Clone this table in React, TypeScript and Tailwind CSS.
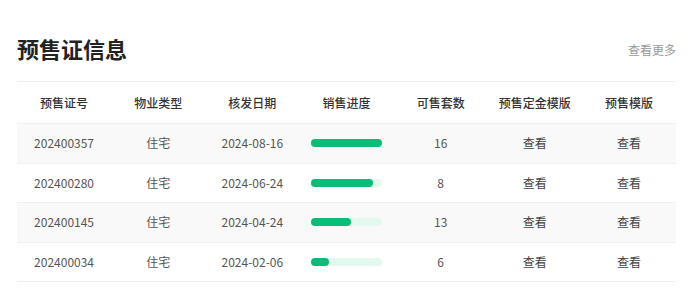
const rows = [
  { no: '202400357', type: '住宅', date: '2024-08-16', progress: 100, count: 16 },
  { no: '202400280', type: '住宅', date: '2024-06-24', progress: 88, count: 8 },
  { no: '202400145', type: '住宅', date: '2024-04-24', progress: 56, count: 13 },
  { no: '202400034', type: '住宅', date: '2024-02-06', progress: 25, count: 6 },
];

const headers = ['预售证号', '物业类型', '核发日期', '销售进度', '可售套数', '预售定金模版', '预售模版'];

function Progress({ value }: { value: number }) {
  return (
    <div className="h-2 w-[71px] rounded-full bg-[#e3f8ef]">
      <div className="h-2 rounded-full bg-[#0bbb78]" style={{ width: `${value}%` }} />
    </div>
  );
}

export default function App() {
  return (
    <div className="h-[305px] w-[700px] bg-white pl-[17px] pr-[24px] pt-[34px] font-['Noto_Sans_CJK_SC',sans-serif]">
      <div className="flex items-center justify-between">
        <h2 className="text-[22px] font-bold leading-[28px] text-[#222]">预售证信息</h2>
        <a className="mt-[4px] text-[12px] text-[#999]">查看更多</a>
      </div>
      <table className="mt-[19px] w-full table-fixed border-collapse text-center text-[12px]">
        <thead>
          <tr className="h-[42px] border-y border-[#f0f0f0]">
            {headers.map((h) => (
              <th key={h} className="font-medium text-[#333]">
                {h}
              </th>
            ))}
          </tr>
        </thead>
        <tbody>
          {rows.map((r, i) => (
            <tr
              key={r.no}
              className={`h-[39.5px] border-b border-[#f0f0f0] text-[#555] ${i % 2 === 0 ? 'bg-[#f9f9f9]' : 'bg-white'}`}
            >
              <td>{r.no}</td>
              <td>{r.type}</td>
              <td>{r.date}</td>
              <td>
                <div className="flex justify-center">
                  <Progress value={r.progress} />
                </div>
              </td>
              <td>{r.count}</td>
              <td className="text-[#444]">查看</td>
              <td className="text-[#444]">查看</td>
            </tr>
          ))}
        </tbody>
      </table>
    </div>
  );
}
